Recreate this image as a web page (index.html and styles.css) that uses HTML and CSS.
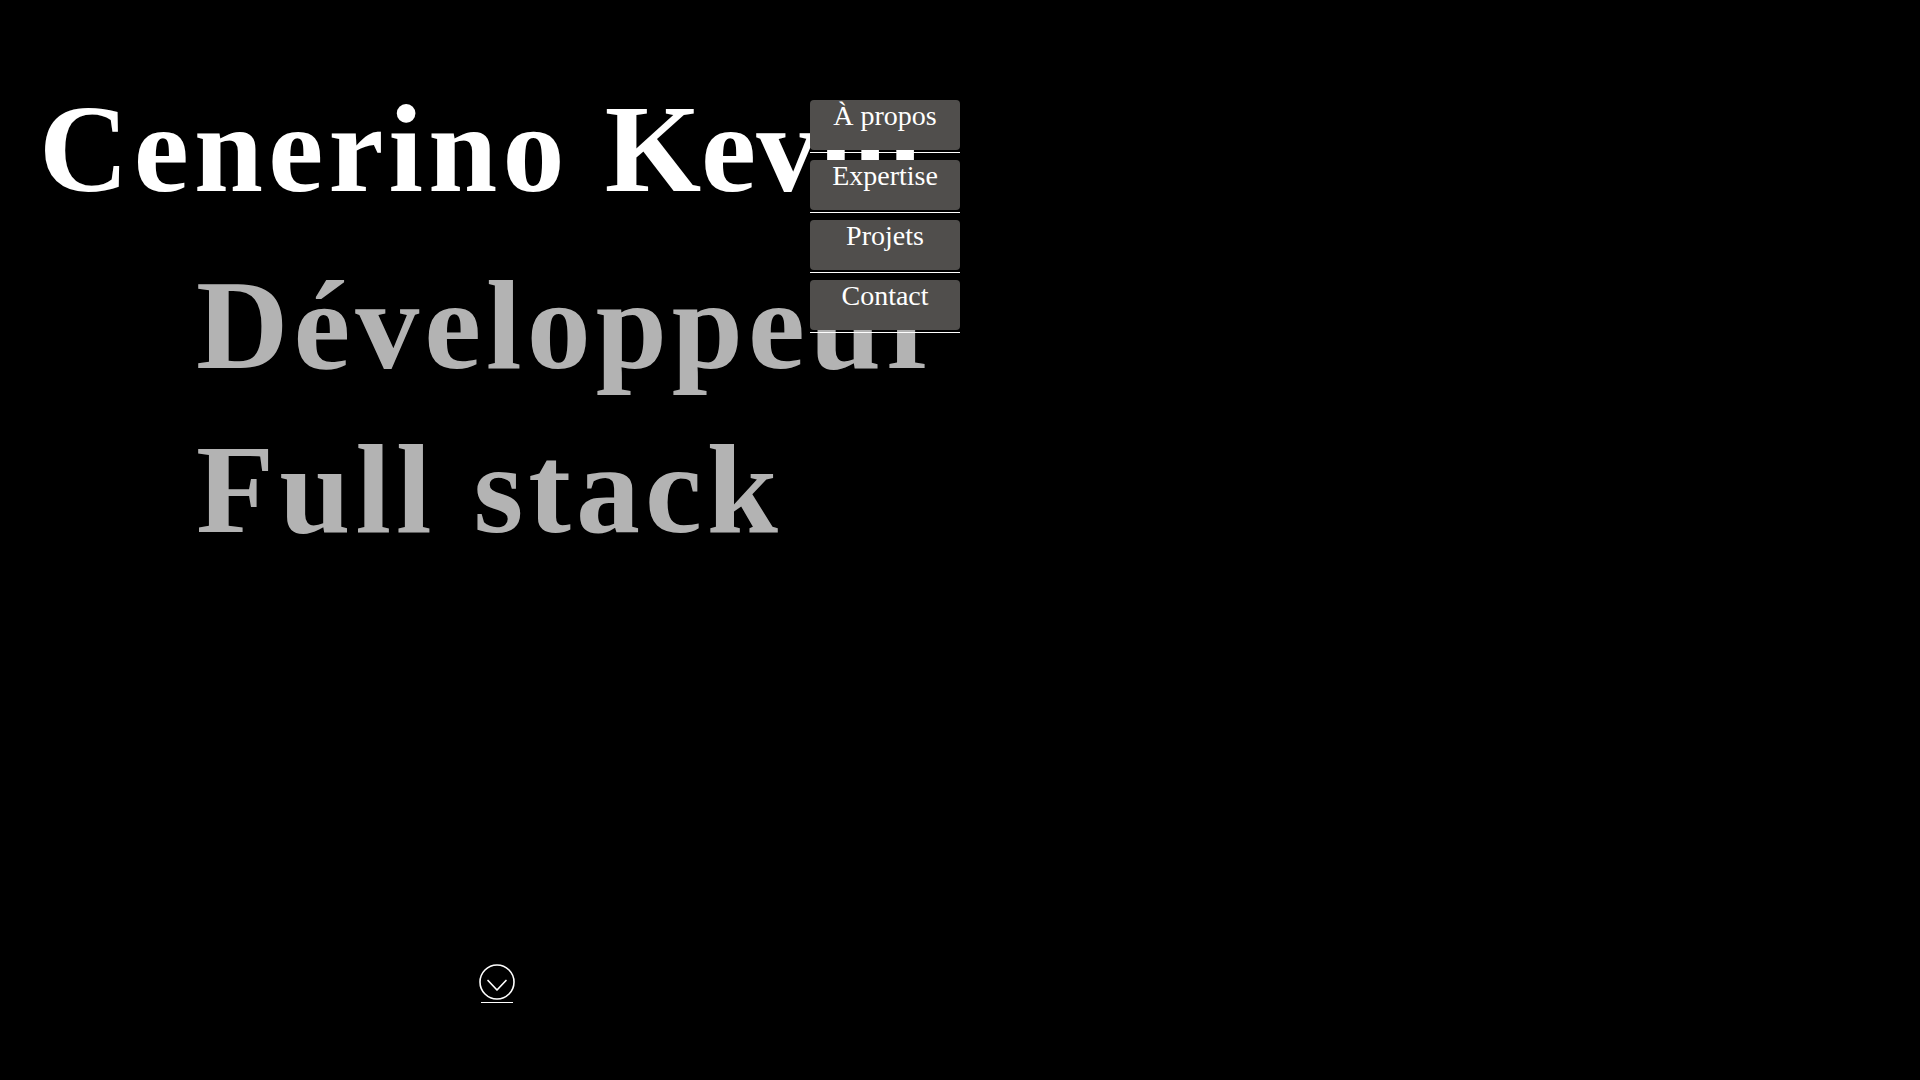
FILE: index.html
```html
<!DOCTYPE html>
<html lang="fr">
<head>
<meta charset="utf-8">
<title>Cenerino Kevin</title>
<link rel="stylesheet" href="styles.css">
</head>
<body>
<main class="hero">
  <div class="intro">
    <h1 class="name"><span class="first">Cenerino</span> <span class="last">Kevin</span></h1>
    <h2 class="role">Développeur<br>Full stack</h2>
    <nav class="menu">
      <ul class="menu-list">
        <li class="menu-item"><a class="menu-link" href="#apropos">À propos</a></li>
        <li class="menu-item"><a class="menu-link" href="#expertise">Expertise</a></li>
        <li class="menu-item"><a class="menu-link" href="#projets">Projets</a></li>
        <li class="menu-item"><a class="menu-link" href="#contact">Contact</a></li>
      </ul>
    </nav>
  </div>
  <a class="scroll" href="#apropos" aria-label="Défiler">
    <svg class="scroll-icon" width="36" height="36" viewBox="0 0 36 36" fill="none" stroke="#fff" stroke-linecap="round" stroke-linejoin="round">
      <circle cx="18" cy="18" r="17" stroke-width="1.6"/>
      <path d="M9 16.5 L18 26 L27 16.5" stroke-width="1.7"/>
    </svg>
    <span class="scroll-line"></span>
  </a>
</main>
</body>
</html>
```

FILE: styles.css
```css
html, body {
  margin: 0;
  padding: 0;
  background: #000;
}

body {
  font-family: "Liberation Serif", "Times New Roman", serif;
  color: #fff;
}

.hero {
  height: 100vh;
  box-sizing: border-box;
  padding-top: 75px;
  display: flex;
  flex-direction: column;
}

.intro {
  display: grid;
  grid-template-columns: 810px 150px;
  grid-template-rows: auto auto;
}

.name {
  grid-column: 1;
  grid-row: 1;
  margin: 0;
  padding-left: 39px;
  font-size: 124px;
  line-height: 150px;
  font-weight: 700;
  color: #fff;
  white-space: nowrap;
  word-spacing: 4px;
}

.first {
  letter-spacing: 5.2px;
}

.last {
  letter-spacing: 0;
}

.role {
  grid-column: 1;
  grid-row: 2;
  margin: 18px 0 0 0;
  padding-left: 196px;
  font-size: 128px;
  line-height: 164px;
  font-weight: 700;
  letter-spacing: 5px;
  color: #b3b3b3;
  white-space: nowrap;
}

.menu {
  grid-column: 2;
  grid-row: 1 / 3;
  align-self: start;
  margin-top: 25px;
}

.menu-list {
  list-style: none;
  margin: 0;
  padding: 0;
}

.menu-item {
  padding-bottom: 2px;
  border-bottom: 1px solid #fff;
  margin-bottom: 7px;
}

.menu-link {
  display: block;
  height: 50px;
  background: #504e4c;
  border-radius: 4px;
  color: #fff;
  text-align: center;
  text-decoration: none;
  font-size: 28px;
  line-height: normal;
}

.scroll {
  margin-top: auto;
  margin-bottom: 77px;
  margin-left: 479px;
  align-self: flex-start;
  display: flex;
  flex-direction: column;
  align-items: center;
  text-decoration: none;
}

.scroll-icon {
  display: block;
}

.scroll-line {
  display: block;
  width: 32px;
  height: 1.5px;
  margin-top: 1.5px;
  background: #fff;
}
```
